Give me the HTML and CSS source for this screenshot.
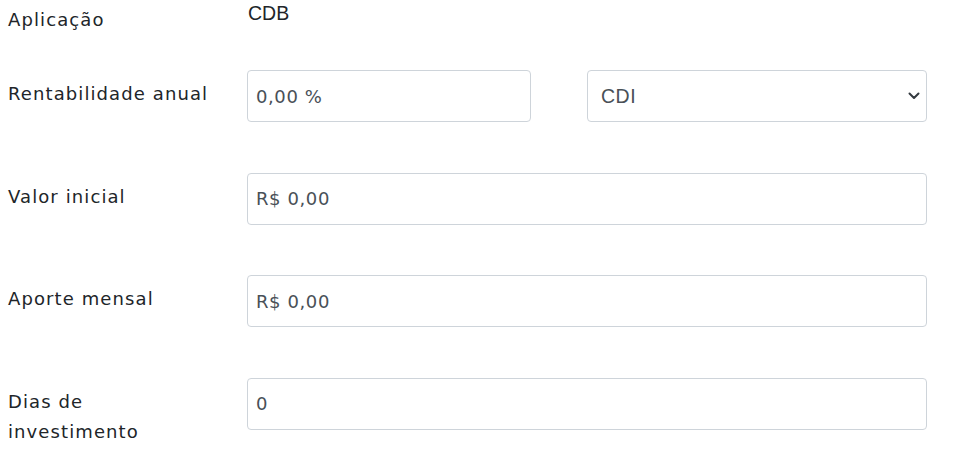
FILE: index.html
```
<!DOCTYPE html>
<html lang="pt-BR">
<head>
<meta charset="utf-8">
<title>Simulador</title>
<link rel="stylesheet" href="styles.css">
</head>
<body>
<form class="sim-form">
  <div class="row row-first">
    <div class="label">Aplicação</div>
    <div class="static">CDB</div>
  </div>
  <div class="row">
    <div class="label">Rentabilidade anual</div>
    <div class="split">
      <div class="field field-rate">0,00 %</div>
      <div class="field select">
        <span class="select-text">CDI</span>
        <svg class="chev" width="12" height="8" viewBox="0 0 12 8"><path d="M1.5 1.5 L6 6 L10.5 1.5" fill="none" stroke="#343a40" stroke-width="2" stroke-linecap="round" stroke-linejoin="round"/></svg>
      </div>
    </div>
  </div>
  <div class="row">
    <div class="label">Valor inicial</div>
    <div class="field">R$ 0,00</div>
  </div>
  <div class="row">
    <div class="label">Aporte mensal</div>
    <div class="field">R$ 0,00</div>
  </div>
  <div class="row row-last">
    <div class="label">Dias de<br>investimento</div>
    <div class="field">0</div>
  </div>
</form>
</body>
</html>
```
FILE: styles.css
```
html, body {
  margin: 0;
  padding: 0;
  background: #ffffff;
}
body {
  padding: 0 8px;
  font-family: "DejaVu Sans", "Open Sans", sans-serif;
  color: #212529;
}
.sim-form {
  width: 919px;
}
.row {
  display: grid;
  grid-template-columns: 239px 680px;
  margin-bottom: 50.5px;
}
.row-first {
  height: 70px;
  margin-bottom: 0;
}
.row-last {
  margin-bottom: 0;
}
.label {
  font-size: 18px;
  letter-spacing: 1.1px;
  line-height: 30px;
  padding-top: 9px;
  color: #212529;
}
.row-first .label {
  padding-top: 5px;
}
.static {
  font-family: "Liberation Sans", Arial, sans-serif;
  font-size: 19.5px;
  line-height: 26px;
  color: #212529;
  padding-left: 1px;
}
.field {
  box-sizing: border-box;
  height: 52px;
  border: 1px solid #ced4da;
  border-radius: 4px;
  padding: 0 8px;
  display: flex;
  align-items: center;
  font-size: 18px;
  letter-spacing: 0.6px;
  color: #495057;
}
.split {
  display: flex;
  gap: 56px;
}
.field-rate {
  width: 284px;
}
.select {
  flex: 1;
  justify-content: space-between;
  padding: 0 6px 0 13px;
}
.select-text {
  font-family: "Liberation Sans", Arial, sans-serif;
  font-size: 19.5px;
  letter-spacing: 0.5px;
  color: #495057;
}
.chev {
  display: block;
}
```
